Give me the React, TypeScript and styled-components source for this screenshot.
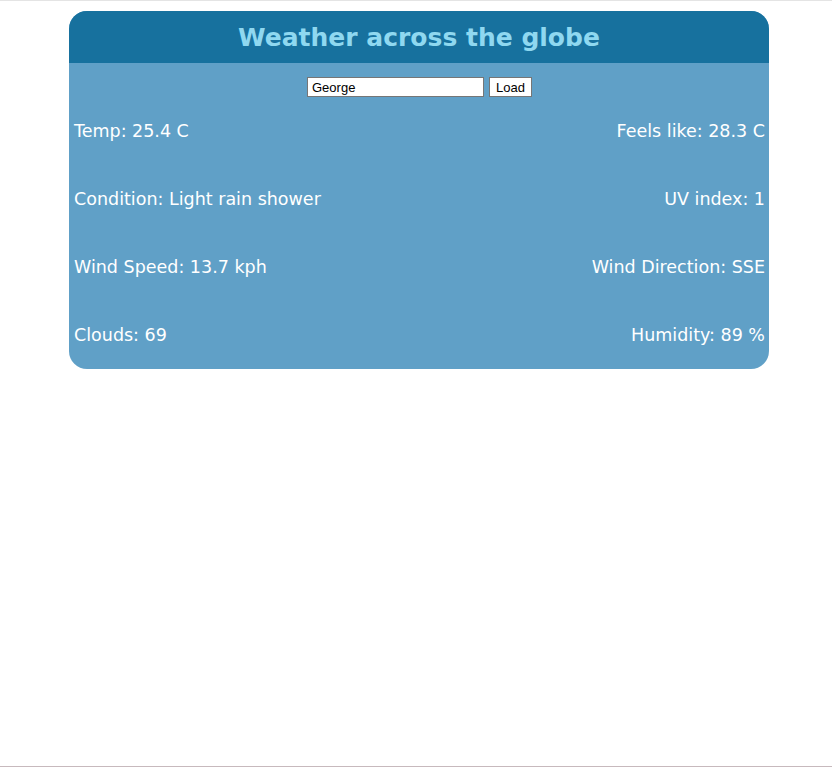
import styled, { createGlobalStyle } from 'styled-components';

const GlobalStyle = createGlobalStyle`
  html {
    box-sizing: border-box;
    min-height: 100vh;
    border-top: 1px solid #e4e4e4;
    border-bottom: 1px solid #c7b9bd;
  }

  body {
    margin: 0;
    padding: 10px 0 0 69px;
    font-family: 'DejaVu Sans', Verdana, sans-serif;
  }
`;

const colors = {
  header: '#17719e',
  body: '#60a0c7',
  title: '#8fd8f0',
  text: '#ffffff',
};

const Card = styled.section`
  width: 700px;
  border-radius: 18px;
  overflow: hidden;
  background-color: ${colors.body};
`;

const Header = styled.header`
  height: 52px;
  display: flex;
  align-items: center;
  justify-content: center;
  background-color: ${colors.header};
`;

const Title = styled.h1`
  margin: 0;
  font-size: 25px;
  font-weight: bold;
  color: ${colors.title};
`;

const Content = styled.div`
  padding: 14px 4px 0 5px;
`;

const SearchForm = styled.form`
  display: flex;
  justify-content: center;
  gap: 5px;
  height: 20px;
`;

const CityInput = styled.input`
  box-sizing: border-box;
  width: 177px;
  height: 20px;
  padding: 1px 4px;
  border: 1px solid #767676;
  font-family: 'Liberation Sans', Arial, sans-serif;
  font-size: 13px;
  color: #000;
`;

const LoadButton = styled.button`
  box-sizing: border-box;
  width: 43px;
  height: 20px;
  padding: 0;
  border: 1px solid #767676;
  background: #fff;
  font-family: 'Liberation Sans', Arial, sans-serif;
  font-size: 13px;
  color: #000;
`;

const StatsGrid = styled.dl`
  margin: 0;
  display: grid;
  grid-template-columns: 1fr 1fr;
  grid-auto-rows: 68px;
  align-items: center;
`;

const Stat = styled.div<{ alignRight?: boolean }>`
  font-size: 17.5px;
  color: ${colors.text};
  text-align: ${({ alignRight }) => (alignRight ? 'right' : 'left')};
`;

const stats = [
  ['Temp: 25.4 C', 'Feels like: 28.3 C'],
  ['Condition: Light rain shower', 'UV index: 1'],
  ['Wind Speed: 13.7 kph', 'Wind Direction: SSE'],
  ['Clouds: 69', 'Humidity: 89 %'],
];

export default function App() {
  return (
    <>
      <GlobalStyle />
      <Card>
        <Header>
          <Title>Weather across the globe</Title>
        </Header>
        <Content>
          <SearchForm onSubmit={(e) => e.preventDefault()}>
            <CityInput defaultValue="George" />
            <LoadButton type="submit">Load</LoadButton>
          </SearchForm>
          <StatsGrid>
            {stats.map(([left, right]) => (
              <>
                <Stat key={left}>{left}</Stat>
                <Stat key={right} alignRight>
                  {right}
                </Stat>
              </>
            ))}
          </StatsGrid>
        </Content>
      </Card>
    </>
  );
}
